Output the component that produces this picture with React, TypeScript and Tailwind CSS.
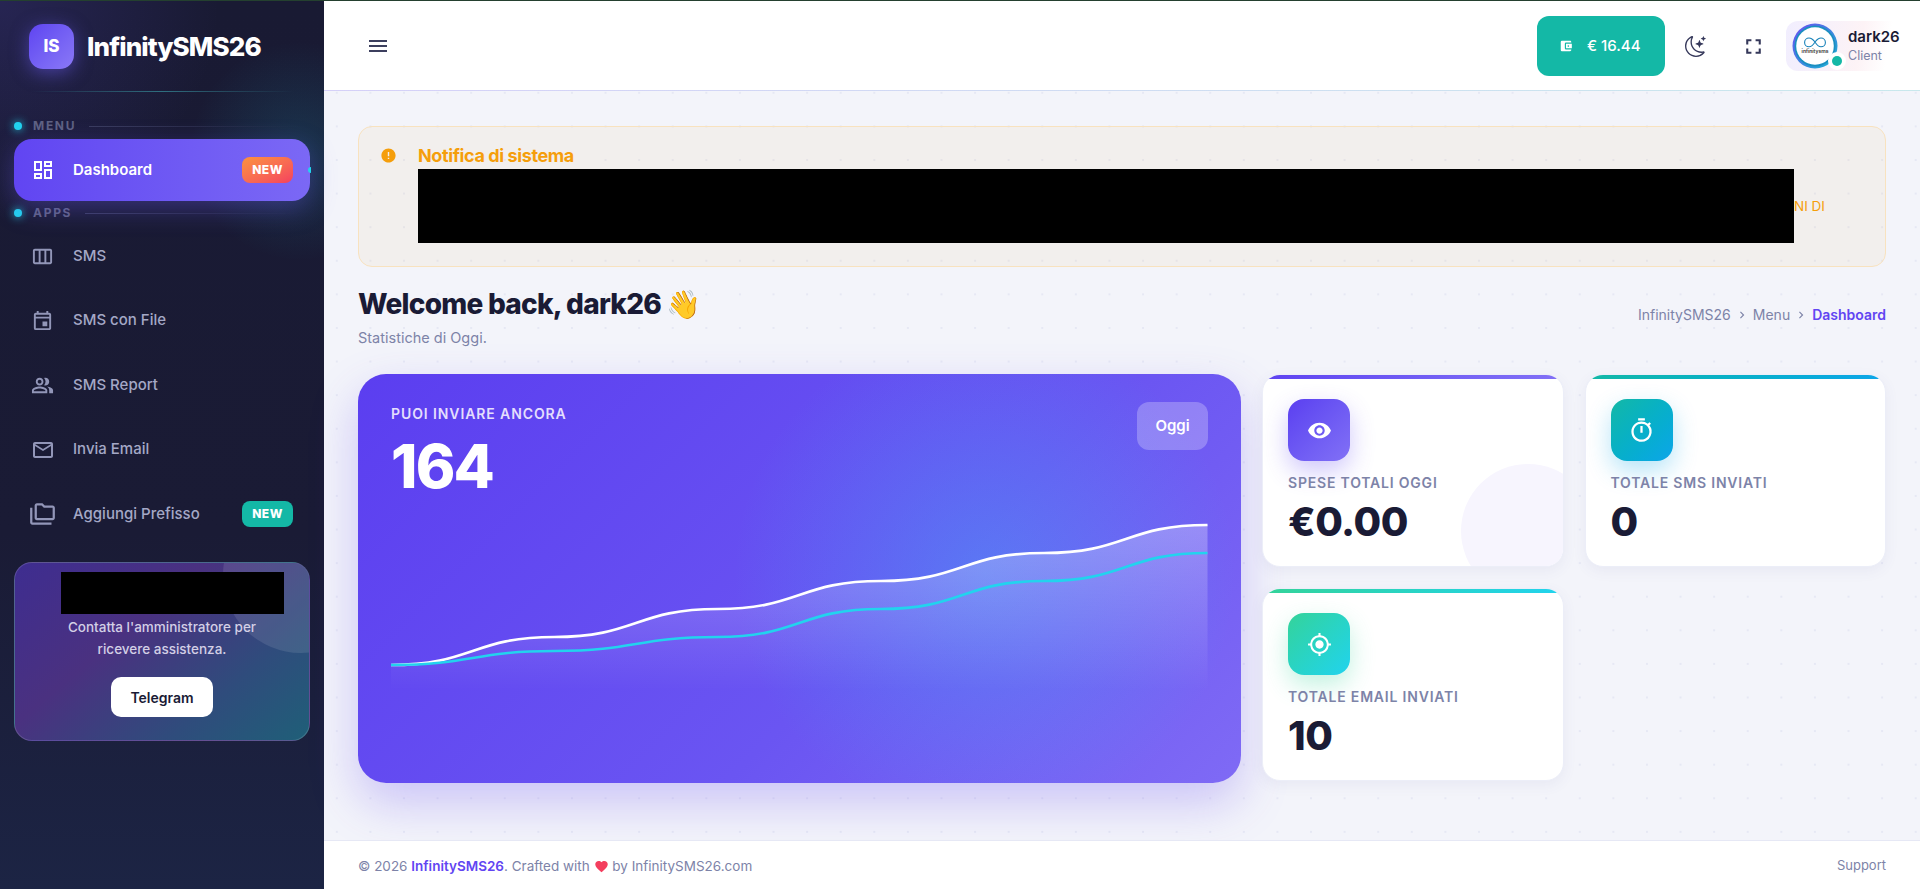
import React from "react";
import {
  MdOutlineDashboard, MdOutlineViewWeek, MdOutlineEvent, MdOutlinePeopleAlt, MdMailOutline, MdOutlineFolderCopy,
  MdAccountBalanceWallet, MdFullscreen, MdMenu, MdError, MdRemoveRedEye, MdOutlineTimer, MdGpsFixed, MdFavorite, MdChevronRight,
} from "react-icons/md";
import { BsMoonStars } from "react-icons/bs";

const xs = [0, 163.3, 326.6, 489.9, 653.2, 816.5];
function curve(ys: number[]) {
  let d = `M${xs[0]} ${ys[0]}`;
  for (let i = 1; i < xs.length; i++) {
    const h = (xs[i] - xs[i - 1]) * 0.5;
    d += ` C${xs[i - 1] + h} ${ys[i - 1]} ${xs[i] - h} ${ys[i]} ${xs[i]} ${ys[i]}`;
  }
  return d;
}
const white = [150, 122, 94, 66, 38, 10];
const cyan = [150, 136, 122, 94, 66, 38];

function Chart() {
  return (
    <svg width="817" height="180" viewBox="0 0 817 180" className="block overflow-visible">
      <defs>
        <linearGradient id="fw" x1="0" y1="0" x2="0" y2="1">
          <stop offset="0" stopColor="#fff" stopOpacity="0.28" />
          <stop offset="1" stopColor="#fff" stopOpacity="0" />
        </linearGradient>
      </defs>
      <path d={curve(white) + " L816.5 175 L0 175 Z"} fill="url(#fw)" />
      <path d={curve(white)} fill="none" stroke="#fff" strokeWidth="2.6" />
      <path d={curve(cyan)} fill="none" stroke="#22d3ee" strokeWidth="2.6" />
    </svg>
  );
}

function SectionLabel({ label, lineMl }: { label: string; lineMl: string }) {
  return (
    <div className="flex h-4 items-center pl-[14px] pr-[24px]">
      <span className="h-2 w-2 rounded-full bg-[#22d3ee] shadow-[0_0_8px_#22d3ee]" />
      <span className="ml-[11px] text-[12px] font-bold leading-none tracking-[1.7px] text-[#5f6283]">{label}</span>
      <span className={`h-px flex-1 bg-gradient-to-r from-[#3a3c5e] to-transparent ${lineMl}`} />
    </div>
  );
}

function NavItem({ icon, label, badge }: { icon: React.ReactNode; label: string; badge?: boolean }) {
  return (
    <div className="mx-[14px] mb-[2.5px] flex h-[62px] items-center pl-[17px] pr-[17px] text-[15px] font-medium text-[#a4a8c6]">
      <span className="flex w-[42px] items-center text-[#9296b8]">{icon}</span>
      <span>{label}</span>
      {badge && (
        <span className="ml-auto flex h-[26px] w-[51px] items-center justify-center rounded-[8px] bg-[#14b8a6] text-[12px] font-extrabold tracking-[0.5px] text-white">NEW</span>
      )}
    </div>
  );
}

function Stat({ label, value, bar, iconBg, shadow, icon, deco }: { label: string; value: string; bar: string; iconBg: string; shadow: string; icon: React.ReactNode; deco?: boolean }) {
  return (
    <div className="relative h-[193px] overflow-hidden rounded-[18px] border border-[#eceef8] bg-white shadow-[0_4px_14px_rgba(90,90,160,0.07)]">
      <div className={`h-1 ${bar}`} />
      {deco && <div className="absolute -bottom-[32px] -right-[32px] h-[134px] w-[134px] rounded-full bg-[#f7f5fe]" />}
      <div className="relative pl-[25px] pt-[20px]">
        <div className={`flex h-[62px] w-[62px] items-center justify-center rounded-[16px] text-white ${iconBg} ${shadow}`}>{icon}</div>
        <div className="mt-[13px] text-[14px] font-semibold uppercase leading-[17px] tracking-[0.8px] text-[#7d83a8]">{label}</div>
        <div className="mt-[8px] text-[40px] font-extrabold leading-[46px] tracking-[-0.5px] text-[#1a1b35]">{value}</div>
      </div>
    </div>
  );
}

function Avatar() {
  return (
    <div className="relative h-[46px] w-[46px]">
      <svg viewBox="0 0 46 46" width="46" height="46">
        <defs>
          <linearGradient id="ring" x1="0" y1="0" x2="1" y2="1">
            <stop offset="0" stopColor="#6d4df2" />
            <stop offset="1" stopColor="#14b8d0" />
          </linearGradient>
        </defs>
        <circle cx="23" cy="23" r="22.5" fill="url(#ring)" />
        <circle cx="23" cy="23" r="20.5" fill="#1a8fc0" />
        <circle cx="23" cy="23" r="18.8" fill="#fff" />
        <path d="M23 19c-2-2.6-3.6-4-6-4a4.4 4.4 0 0 0 0 8.8c2.4 0 4-1.4 6-4.8 2-2.6 3.6-4 6-4a4.4 4.4 0 0 1 0 8.8c-2.4 0-4-1.4-6-4.8Z" fill="none" stroke="#1580b8" strokeWidth="1.1" />
        <text x="23" y="30" textAnchor="middle" fontSize="5" fontWeight="600" fill="#333" fontFamily="Inter, sans-serif">infinitysms</text>
      </svg>
      <span className="absolute -bottom-[1px] -right-[8px] flex h-[18px] w-[18px] items-center justify-center rounded-full bg-white">
        <span className="h-[10px] w-[10px] rounded-full bg-[#14b8a6]" />
      </span>
    </div>
  );
}

export default function App() {
  return (
    <div className="flex h-[889px] flex-col overflow-hidden bg-white [font-family:Inter,sans-serif]">
      <div className="h-px bg-[#24402f]" />
      <div className="flex min-h-0 flex-1">
        <aside className="w-[324px] shrink-0 bg-[radial-gradient(circle_at_300px_150px,rgba(34,211,238,0.14),transparent_110px),radial-gradient(circle_at_0px_0px,rgba(108,92,246,0.16),transparent_220px),linear-gradient(180deg,#191a33_0%,#1a1b35_60%,#1c2444_100%)]">
          <div className="flex items-center pl-[29px] pt-[23px]">
            <div className="relative flex h-[45px] w-[45px] items-center justify-center overflow-hidden rounded-[14px] bg-gradient-to-br from-[#5f43f1] to-[#8b78f6] text-[17px] font-extrabold text-white shadow-[0_4px_18px_rgba(108,92,246,0.5)]">
              IS
              <span className="absolute -right-[5px] -top-[5px] h-[10px] w-[10px] rounded-full bg-[#22d3ee]" />
            </div>
            <div className="ml-[13px] text-[26px] font-extrabold leading-none tracking-[-0.9px] text-white">InfinitySMS26</div>
          </div>
          <div className="mx-[30px] mt-[22px] h-px bg-gradient-to-r from-transparent via-[#2f6f80] to-transparent" />
          <div className="mt-[26px]"><SectionLabel label="MENU" lineMl="ml-[13px]" /></div>
          <div className="relative mx-[14px] mt-[5px] flex h-[62px] items-center rounded-[18px] bg-gradient-to-r from-[#6145f2] to-[#7b68f5] pl-[17px] pr-[17px] text-[15px] font-semibold text-white shadow-[0_8px_26px_rgba(108,92,246,0.35)]">
            <span className="flex w-[42px] items-center"><MdOutlineDashboard size={24} /></span>
            <span>Dashboard</span>
            <span className="ml-auto flex h-[26px] w-[51px] items-center justify-center rounded-[8px] bg-gradient-to-br from-[#fb923c] to-[#f43f5e] text-[12px] font-extrabold tracking-[0.5px] text-white">NEW</span>
            <span className="absolute -right-[1px] top-[28px] h-[6px] w-[3px] rounded-l-full bg-[#22d3ee]" />
          </div>
          <div className="mb-[4px] mt-[4px]"><SectionLabel label="APPS" lineMl="ml-[13px]" /></div>
          <NavItem icon={<MdOutlineViewWeek size={23} />} label="SMS" />
          <NavItem icon={<MdOutlineEvent size={23} />} label="SMS con File" />
          <NavItem icon={<MdOutlinePeopleAlt size={23} />} label="SMS Report" />
          <NavItem icon={<MdMailOutline size={24} />} label="Invia Email" />
          <NavItem icon={<MdOutlineFolderCopy size={27} className="-ml-[2px]" />} label="Aggiungi Prefisso" badge />
          <div className="relative mx-[14px] mt-[17px] h-[179px] overflow-hidden rounded-[18px] border border-white/15 bg-[linear-gradient(140deg,#3e2d90_0%,#4a3180_38%,#2f4c7c_72%,#1f5f78_100%)]">
            <div className="absolute -right-[70px] -top-[66px] h-[156px] w-[156px] rounded-full bg-white/10" />
            <div className="relative ml-[46px] mt-[9px] h-[42px] w-[223px] bg-black" />
            <p className="relative mt-[2px] text-center text-[13.5px] font-medium leading-[22px] text-[#d3cfe6]">Contatta l'amministratore per<br />ricevere assistenza.</p>
            <div className="relative mx-auto mt-[17px] flex h-[40px] w-[102px] items-center justify-center rounded-[10px] bg-white text-[14px] font-semibold text-[#1a1b35]">Telegram</div>
          </div>
        </aside>

        <div className="flex min-w-0 flex-1 flex-col">
          <header className="relative flex h-[90px] shrink-0 items-center bg-white pl-[42px] after:absolute after:inset-x-0 after:bottom-0 after:h-px after:bg-gradient-to-r after:from-[#d5d0f8] after:to-[#c8e8ec] after:content-['']">
            <MdMenu size={24} className="text-[#3c3f5e]" />
            <div className="ml-auto flex h-[60px] w-[128px] items-center rounded-[12px] bg-[#14b8a6] pl-[22px] text-[15px] font-medium text-white">
              <MdAccountBalanceWallet size={14} />
              <span className="ml-[14px]">€ 16.44</span>
            </div>
            <BsMoonStars size={21} className="ml-[20px] text-[#35385a]" />
            <MdFullscreen size={25} className="ml-[35px] text-[#35385a]" />
            <div className="ml-[20px] flex h-[50px] w-[134px] items-center rounded-[12px] bg-[linear-gradient(100deg,#f1eefe_0%,#fdf3f6_55%,#ffffff_75%)] pl-[6px] pr-[14px]">
              <Avatar />
              <div className="ml-[10px]">
                <div className="text-[15px] font-semibold leading-[20px] text-[#1a1b35]">dark26</div>
                <div className="text-[12.5px] leading-[18px] text-[#7d83a8]">Client</div>
              </div>
            </div>
          </header>

          <main className="min-h-0 flex-1 bg-[#f3f4fa] bg-[radial-gradient(circle,#e6e8f4_1px,transparent_1.5px)] bg-[length:33.6px_33.6px] bg-[position:-4px_-15px] px-[34px] pt-[35px]">
            <div className="flex h-[141px] rounded-[14px] border border-[#f8e2bf] bg-[rgba(245,158,11,0.055)]">
              <MdError size={17} className="ml-[21px] mt-[20px] shrink-0 text-[#f59e0b]" />
              <div className="ml-[21px] flex-1 pt-[16px]">
                <div className="text-[18px] font-bold leading-[26px] tracking-[-0.4px] text-[#f59e0b]">Notifica di sistema</div>
                <div className="flex items-center">
                  <div className="h-[74px] w-[1376px] bg-black" />
                  <span className="text-[13.5px] text-[#f59e0b] [margin-top:1px]">NI DI</span>
                </div>
              </div>
            </div>

            <div className="mt-[18px] flex items-start justify-between">
              <div>
                <h1 className="text-[28px] font-extrabold leading-[38px] tracking-[-0.75px] text-[#1a1b35]">Welcome back, dark26 <span className="tracking-normal">👋</span></h1>
                <p className="mt-[5px] text-[14.5px] leading-[20px] text-[#7d83a8]">Statistiche di Oggi.</p>
              </div>
              <div className="mt-[19px] flex items-center text-[14px] text-[#7d83a8]">
                <span>InfinitySMS26</span>
                <MdChevronRight size={14} className="mx-[4px]" />
                <span>Menu</span>
                <MdChevronRight size={14} className="mx-[4px]" />
                <span className="font-semibold text-[#6145f2]">Dashboard</span>
              </div>
            </div>

            <div className="mt-[26px] flex gap-[21px]">
              <div className="h-[409px] w-[883px] shrink-0 rounded-[28px] bg-[radial-gradient(circle_at_71%_49%,rgba(56,189,248,0.32),transparent_38%),linear-gradient(135deg,#5b3ef0_0%,#6a55f2_60%,#7f6af5_100%)] pl-[33px] pr-[33px] pt-[28px] shadow-[0_20px_48px_rgba(97,69,242,0.28)]">
                <div className="flex items-start justify-between">
                  <div>
                    <div className="mt-[3px] text-[14px] font-semibold leading-[17px] tracking-[0.9px] text-[#e4defd]">PUOI INVIARE ANCORA</div>
                    <div className="mt-[8px] text-[60px] font-extrabold leading-[72px] tracking-[-1.8px] text-white">164</div>
                  </div>
                  <div className="flex h-[48px] w-[71px] items-center justify-center rounded-[12px] bg-white/25 text-[15px] font-semibold text-white">Oggi</div>
                </div>
                <div className="mt-[13px]"><Chart /></div>
              </div>
              <div className="grid flex-1 grid-cols-2 content-start gap-[21px]">
                <Stat label="Spese totali oggi" value="€0.00" bar="bg-gradient-to-r from-[#5f43f1] to-[#8270f6]" iconBg="bg-gradient-to-br from-[#5b3ef0] to-[#8270f6]" shadow="shadow-[0_10px_24px_rgba(97,69,242,0.3)]" icon={<MdRemoveRedEye size={25} />} deco />
                <Stat label="Totale SMS inviati" value="0" bar="bg-gradient-to-r from-[#14b8a6] to-[#0ea5e9]" iconBg="bg-gradient-to-br from-[#14b8a6] to-[#0ea5e9]" shadow="shadow-[0_10px_24px_rgba(14,165,233,0.3)]" icon={<MdOutlineTimer size={27} />} />
                <Stat label="Totale email inviati" value="10" bar="bg-gradient-to-r from-[#34d399] to-[#22d3ee]" iconBg="bg-gradient-to-br from-[#34d399] to-[#22d3ee]" shadow="shadow-[0_10px_24px_rgba(52,211,153,0.3)]" icon={<MdGpsFixed size={25} />} />
              </div>
            </div>
          </main>

          <footer className="relative flex h-[49px] shrink-0 items-center justify-between border-t border-[#e6e8f5] bg-white/95 px-[34px] pt-[2px] text-[13.5px] text-[#7d83a8]">
            <div className="flex items-center">
              <span>© 2026&nbsp;</span><span className="font-semibold text-[#6145f2]">InfinitySMS26</span><span>. Crafted with&nbsp;</span>
              <MdFavorite size={15} className="text-[#f43f5e]" /><span>&nbsp;by InfinitySMS26.com</span>
            </div>
            <span className="text-[13px]">Support</span>
          </footer>
        </div>
      </div>
    </div>
  );
}
